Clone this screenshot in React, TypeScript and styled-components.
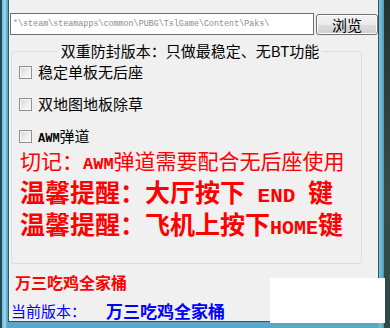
import React from "react";
import { styled, createGlobalStyle } from "styled-components";

const GlobalStyle = createGlobalStyle`
  html, body {
    margin: 0;
    padding: 0;
  }
  body {
    font-family: "Noto Sans CJK SC", sans-serif;
    background: #22302c;
  }
`;

const options = ["稳定单板无后座", "双地图地板除草"];

const App: React.FC = () => {
  return (
    <>
      <GlobalStyle />
      <Page>
        <Frame>
          <Client>
            <PathRow>
              <PathBox>*\steam\steamapps\common\PUBG\TslGame\Content\Paks\</PathBox>
              <BrowseButton>浏览</BrowseButton>
            </PathRow>
            <GroupBox>
              <GroupTitle>双重防封版本：只做最稳定、无BT功能</GroupTitle>
              {options.map((o) => (
                <OptionRow key={o}>
                  <CheckBox />
                  <OptionLabel>{o}</OptionLabel>
                </OptionRow>
              ))}
              <OptionRow>
                <CheckBox />
                <OptionLabel>
                  <SmallLatin>AWM</SmallLatin>弹道
                </OptionLabel>
              </OptionRow>
              <Notice $size={21} $lh={24} $bold={false}>
                切记：<Latin $size={17}>AWM</Latin>弹道需要配合无后座使用
              </Notice>
              <Notice $size={25} $lh={32} $bold $gap={3}>
                温馨提醒：大厅按下<Latin $size={21}> END </Latin>键
              </Notice>
              <Notice $size={25} $lh={32} $bold>
                温馨提醒：飞机上按下<Latin $size={20}>HOME</Latin>键
              </Notice>
            </GroupBox>
            <Brand>万三吃鸡全家桶</Brand>
            <VersionRow>
              <VersionLabel>当前版本：</VersionLabel>
              <VersionName>万三吃鸡全家桶</VersionName>
            </VersionRow>
          </Client>
        </Frame>
        <CoverPatch />
      </Page>
    </>
  );
};

export default App;

const Page = styled.div`
  position: relative;
  width: 390px;
  height: 328px;
  overflow: hidden;
  background: linear-gradient(to bottom, #26322e 0%, #3a4a44 60%, #2c4a48 100%);
`;

const Frame = styled.div`
  display: flex;
  flex-direction: column;
  box-sizing: border-box;
  width: 384px;
  height: 328px;
  padding: 0 5px 6px 8px;
  background: linear-gradient(
    to right,
    #1c4b5a 0px,
    #1c4b5a 2px,
    #69b8d5 2px,
    #a6d8ea 5px,
    #5aa8c8 7px,
    #5aa8c8 378px,
    #7cc0da 380px,
    #4f97b6 384px
  );
`;

const Client = styled.div`
  flex: 1;
  display: flex;
  flex-direction: column;
  overflow: hidden;
  background: #f0f0f0;
  border: 1px solid #2e5563;
  border-top: none;
  box-shadow: inset 1px 0 0 #fbfbfb;
`;

const PathRow = styled.div`
  display: flex;
  align-items: flex-start;
  gap: 2px;
  margin-top: 13px;
  padding-left: 1px;
`;

const PathBox = styled.div`
  box-sizing: border-box;
  width: 304px;
  height: 22px;
  padding: 0 2px;
  border: 1px solid #6f6f6f;
  background: #ffffff;
  color: #8a8a8a;
  font-family: "Liberation Mono", monospace;
  font-size: 8.4px;
  line-height: 20px;
  white-space: nowrap;
  overflow: hidden;
`;

const BrowseButton = styled.button`
  box-sizing: border-box;
  width: 62px;
  height: 21px;
  margin-top: 1px;
  padding: 0;
  border: 1px solid #707070;
  border-radius: 3px;
  background: linear-gradient(to bottom, #f3f3f3 0%, #ebebeb 50%, #dddddd 50%, #cfcfcf 100%);
  box-shadow: inset 0 0 0 1px #fcfcfc;
  font-family: "Noto Sans CJK SC", sans-serif;
  font-size: 15px;
  line-height: 19px;
  color: #000000;
`;

const GroupBox = styled.fieldset`
  box-sizing: border-box;
  width: 351px;
  height: 223px;
  margin: 7px 0 0 2px;
  padding: 0 0 0 7px;
  min-width: 0;
  border: 1px solid #d5dfe5;
  border-radius: 3px;
`;

const GroupTitle = styled.legend`
  margin: 0 auto;
  padding: 0 3px;
  font-size: 15px;
  line-height: 18px;
  height: 18px;
  color: #000000;
`;

const OptionRow = styled.div`
  display: flex;
  align-items: center;
  gap: 6px;
  height: 24px;
  & + & {
    margin-top: 8px;
  }
`;

const CheckBox = styled.span`
  box-sizing: border-box;
  width: 13px;
  height: 13px;
  border: 1px solid #8e8f8f;
  background: linear-gradient(135deg, #d6d6d6 0%, #eeeeee 60%, #fdfdfd 100%);
  box-shadow: inset 0 0 0 1px #f6f6f6;
`;

const OptionLabel = styled.span`
  font-size: 15px;
  line-height: 20px;
  color: #000000;
`;

const SmallLatin = styled.span`
  font-family: "Liberation Mono", monospace;
  font-weight: 700;
  font-size: 12px;
  line-height: 1;
`;

const Notice = styled.div<{ $size: number; $lh: number; $bold: boolean; $gap?: number }>`
  height: ${(p) => p.$lh}px;
  margin: ${(p) => p.$gap ?? 0}px 0 0 1px;
  color: #ff0000;
  font-size: ${(p) => p.$size}px;
  line-height: ${(p) => p.$lh}px;
  font-weight: ${(p) => (p.$bold ? 700 : 400)};
  white-space: pre;
`;

const Latin = styled.span<{ $size: number }>`
  font-family: "Liberation Mono", monospace;
  font-weight: 700;
  font-size: ${(p) => p.$size}px;
  line-height: 1;
`;

const Brand = styled.div`
  height: 20px;
  margin: 8px 0 0 6px;
  color: #ff0000;
  font-size: 16px;
  font-weight: 700;
  line-height: 20px;
`;

const VersionRow = styled.div`
  display: flex;
  align-items: center;
  margin-top: 9px;
  padding-left: 2px;
  height: 20px;
  line-height: 20px;
`;

const VersionLabel = styled.span`
  color: #0000ff;
  font-size: 15px;
`;

const VersionName = styled.span`
  margin-left: 20px;
  color: #0000ff;
  font-size: 17px;
  font-weight: 700;
`;

const CoverPatch = styled.div`
  position: absolute;
  left: 270px;
  top: 278px;
  width: 115px;
  height: 45px;
  background: #ffffff;
`;
